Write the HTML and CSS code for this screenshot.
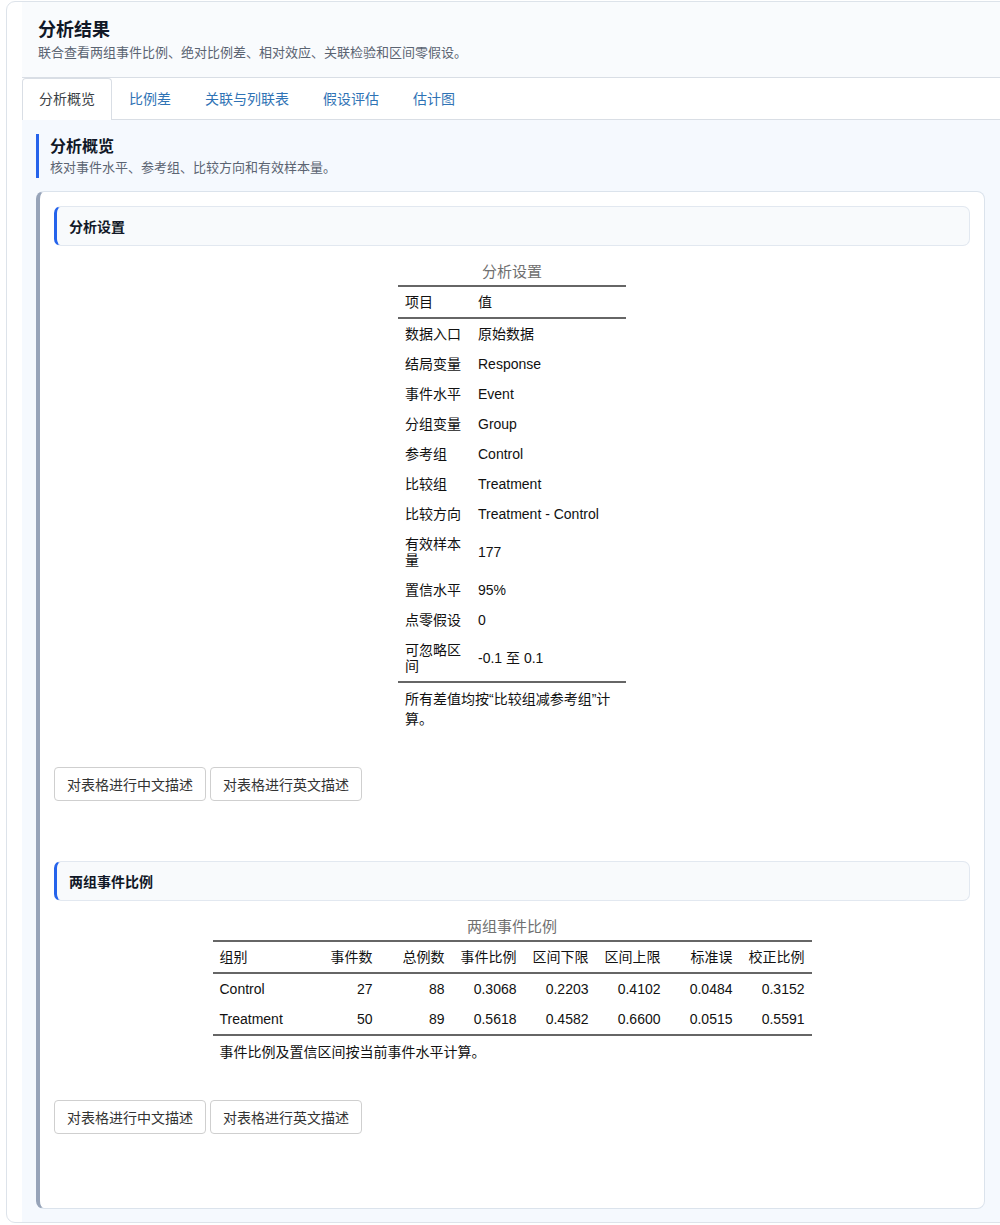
FILE: index.html
```html
<!DOCTYPE html>
<html lang="zh-CN">
<head>
<meta charset="utf-8">
<title>分析结果</title>
<link rel="stylesheet" href="styles.css">
</head>
<body>
<div class="app">
  <header class="app-header">
    <h1 class="app-title">分析结果</h1>
    <p class="app-sub">联合查看两组事件比例、绝对比例差、相对效应、关联检验和区间零假设。</p>
  </header>
  <nav class="tabs">
    <a class="tab active">分析概览</a>
    <a class="tab">比例差</a>
    <a class="tab">关联与列联表</a>
    <a class="tab">假设评估</a>
    <a class="tab">估计图</a>
  </nav>
  <main class="panel">
    <div class="section-head">
      <h2 class="section-title">分析概览</h2>
      <p class="section-sub">核对事件水平、参考组、比较方向和有效样本量。</p>
    </div>
    <div class="card">
      <section class="block">
        <div class="block-head">分析设置</div>
        <div class="table-wrap">
          <table class="gt settings">
            <caption>分析设置</caption>
            <thead>
              <tr><th class="c1">项目</th><th>值</th></tr>
            </thead>
            <tbody>
              <tr><td>数据入口</td><td>原始数据</td></tr>
              <tr><td>结局变量</td><td>Response</td></tr>
              <tr><td>事件水平</td><td>Event</td></tr>
              <tr><td>分组变量</td><td>Group</td></tr>
              <tr><td>参考组</td><td>Control</td></tr>
              <tr><td>比较组</td><td>Treatment</td></tr>
              <tr><td>比较方向</td><td>Treatment - Control</td></tr>
              <tr><td>有效样本量</td><td>177</td></tr>
              <tr><td>置信水平</td><td>95%</td></tr>
              <tr><td>点零假设</td><td>0</td></tr>
              <tr><td>可忽略区间</td><td>-0.1 至 0.1</td></tr>
            </tbody>
            <tfoot>
              <tr><td colspan="2">所有差值均按“比较组减参考组”计算。</td></tr>
            </tfoot>
          </table>
        </div>
        <div class="actions">
          <button class="btn">对表格进行中文描述</button>
          <button class="btn">对表格进行英文描述</button>
        </div>
      </section>
      <section class="block">
        <div class="block-head">两组事件比例</div>
        <div class="table-wrap">
          <table class="gt props">
            <caption>两组事件比例</caption>
            <colgroup>
              <col class="w1"><col class="wn"><col class="wn"><col class="wn"><col class="wn"><col class="wn"><col class="wn"><col class="wn">
            </colgroup>
            <thead>
              <tr><th>组别</th><th class="num">事件数</th><th class="num">总例数</th><th class="num">事件比例</th><th class="num">区间下限</th><th class="num">区间上限</th><th class="num">标准误</th><th class="num">校正比例</th></tr>
            </thead>
            <tbody>
              <tr><td>Control</td><td class="num">27</td><td class="num">88</td><td class="num">0.3068</td><td class="num">0.2203</td><td class="num">0.4102</td><td class="num">0.0484</td><td class="num">0.3152</td></tr>
              <tr><td>Treatment</td><td class="num">50</td><td class="num">89</td><td class="num">0.5618</td><td class="num">0.4582</td><td class="num">0.6600</td><td class="num">0.0515</td><td class="num">0.5591</td></tr>
            </tbody>
            <tfoot>
              <tr><td colspan="8">事件比例及置信区间按当前事件水平计算。</td></tr>
            </tfoot>
          </table>
        </div>
        <div class="actions">
          <button class="btn">对表格进行中文描述</button>
          <button class="btn">对表格进行英文描述</button>
        </div>
      </section>
    </div>
  </main>
</div>
</body>
</html>
```

FILE: styles.css
```css
html, body {
  overflow-x: hidden;
}
body {
  margin: 0;
  background: #ffffff;
  font-family: "Liberation Sans", Arial, "Noto Sans CJK SC", sans-serif;
  color: #1f2937;
}
.app {
  margin: 1px 0 0 6px;
  width: 1010px;
  border: 1px solid #dde3ea;
  border-radius: 9px;
  background: #ffffff;
  padding: 0 15px 0 15px;
  box-sizing: border-box;
}
.app-header {
  background: #f9fbfd;
  padding: 13px 16px 0 16px;
  height: 76px;
  box-sizing: border-box;
  border-bottom: 1px solid #d9dee5;
}
.app-title {
  margin: 0;
  font-family: "Noto Sans CJK SC", sans-serif;
  font-size: 18px;
  line-height: 26px;
  font-weight: 700;
  color: #111827;
}
.app-sub {
  margin: 1px 0 0 0;
  font-family: "Noto Sans CJK SC", sans-serif;
  font-size: 13px;
  line-height: 20px;
  color: #5b6472;
}
.tabs {
  display: flex;
  height: 42px;
  box-sizing: border-box;
  border-bottom: 1px solid #d9dee5;
}
.tab {
  display: flex;
  align-items: center;
  padding: 0 16px 3px 16px;
  height: 42px;
  box-sizing: border-box;
  border: 1px solid transparent;
  border-bottom: none;
  border-radius: 4px 4px 0 0;
  font-family: "Noto Sans CJK SC", sans-serif;
  font-size: 14px;
  color: #2f73b5;
  cursor: pointer;
}
.tab.active {
  color: #3b3f45;
  background: #ffffff;
  border-color: #d9dee5;
  margin-bottom: -1px;
}
.panel {
  background: #f5f9fe;
  padding: 14px 15px 13px 14px;
}
.section-head {
  border-left: 3px solid #2563eb;
  padding: 0 0 0 11px;
  height: 44px;
  box-sizing: border-box;
}
.section-title {
  margin: 0;
  font-family: "Noto Sans CJK SC", sans-serif;
  font-size: 16px;
  line-height: 22px;
  font-weight: 700;
  color: #111827;
}
.section-sub {
  margin: 0;
  font-family: "Noto Sans CJK SC", sans-serif;
  font-size: 13px;
  line-height: 22px;
  color: #5b6472;
}
.card {
  margin-top: 13px;
  background: #ffffff;
  border: 1px solid #dbe3ec;
  border-left: 4px solid #97a4b9;
  border-radius: 8px;
  padding: 14px;
}
.block {
  padding-bottom: 60px;
}
.block-head {
  height: 40px;
  box-sizing: border-box;
  background: #f8fafc;
  border: 1px solid #e2e8f0;
  border-left: 3px solid #2563eb;
  border-radius: 7px;
  padding: 0 0 0 12px;
  display: flex;
  align-items: center;
  font-family: "Noto Sans CJK SC", sans-serif;
  font-size: 14px;
  font-weight: 700;
  color: #111827;
}
.table-wrap {
  display: flex;
  justify-content: center;
  padding-top: 16px;
}
.gt {
  border-collapse: collapse;
  font-family: "Liberation Sans", Arial, "Noto Sans CJK SC", sans-serif;
  font-size: 14px;
  color: #111111;
}
.gt caption {
  font-family: "Liberation Sans", Arial, "Noto Sans CJK SC", sans-serif;
  font-size: 15px;
  line-height: 20px;
  color: #707070;
  padding-bottom: 3px;
}
.gt thead tr {
  border-top: 2px solid #666666;
  border-bottom: 2px solid #666666;
}
.gt th {
  font-weight: 400;
  text-align: left;
  padding: 7px;
  line-height: 16px;
}
.gt td {
  padding: 7px;
  line-height: 16px;
  text-align: left;
  vertical-align: middle;
}
.gt tbody tr:last-child {
  border-bottom: 2px solid #666666;
}
.gt tfoot td {
  padding: 6px 7px 0 7px;
  line-height: 20px;
}
.gt .num {
  text-align: right;
}
.settings {
  width: 228px;
}
.settings .c1 {
  width: 59px;
}
.props {
  width: 599px;
  table-layout: fixed;
}
.props .w1 {
  width: 95px;
}
.props .wn {
  width: 72px;
}
.actions {
  display: flex;
  gap: 4px;
  margin-top: 38px;
}
.btn {
  height: 34px;
  padding: 0 12px;
  background: #ffffff;
  border: 1px solid #cfcfcf;
  border-radius: 4px;
  font-family: "Noto Sans CJK SC", sans-serif;
  font-size: 14px;
  color: #333333;
  cursor: pointer;
}
```
